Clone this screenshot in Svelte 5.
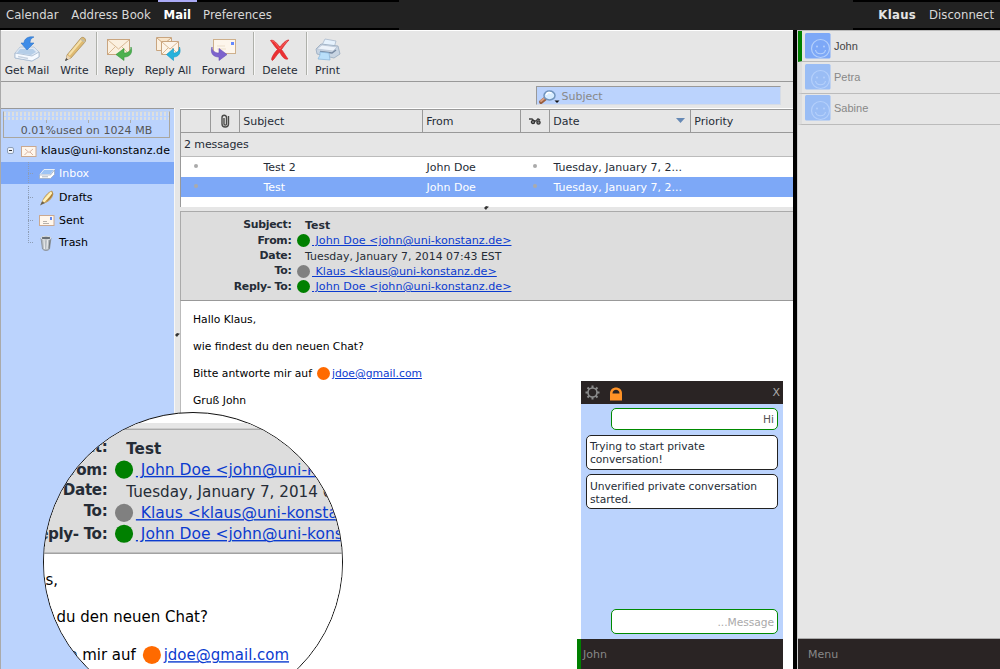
<script>
  const nav = ['Calendar', 'Address Book', 'Mail', 'Preferences'];
  const tools = [
    { id: 'get', label: 'Get Mail', w: 52 },
    { id: 'write', label: 'Write', w: 43 },
    { id: 'reply', label: 'Reply', w: 46, sep: true },
    { id: 'replyall', label: 'Reply All', w: 52 },
    { id: 'forward', label: 'Forward', w: 59 },
    { id: 'delete', label: 'Delete', w: 53, sep: true },
    { id: 'print', label: 'Print', w: 42, sep: true }
  ];
  const folders = [
    { id: 'inbox', name: 'Inbox' },
    { id: 'drafts', name: 'Drafts' },
    { id: 'sent', name: 'Sent' },
    { id: 'trash', name: 'Trash' }
  ];
  const messages = [
    { subject: 'Test 2', from: 'John Doe', date: 'Tuesday, January 7, 2...' },
    { subject: 'Test', from: 'John Doe', date: 'Tuesday, January 7, 2...', selected: true }
  ];
  const headers = [
    { label: 'Subject:', text: 'Test', kind: 'bold' },
    { label: 'From:', text: 'John Doe <john@uni-konstanz.de>', color: '#008000' },
    { label: 'Date:', text: 'Tuesday, January 7, 2014 07:43 EST', kind: 'plain' },
    { label: 'To:', text: 'Klaus <klaus@uni-konstanz.de>', color: '#808080' },
    { label: 'Reply- To:', text: 'John Doe <john@uni-konstanz.de>', color: '#008000' }
  ];
  const buddies = ['John', 'Petra', 'Sabine'];
</script>

{#snippet toolIcon(id)}
  <svg width="28" height="28" viewBox="0 0 28 28">
    {#if id === 'get'}
      <path d="M2 17 7 11h14l5 5v5l-7 4-17-3z" fill="#dfe9f5" stroke="#b3c3d6" stroke-width=".8" />
      <path d="m2 17 17 3 7-4v5l-7 4-17-3z" fill="#f6faff" stroke="#a3b7ce" stroke-width=".8" />
      <path d="m7 13-3 4 14 2 5-3-3-3z" fill="#b5cee8" />
      <path d="M21 1C15 0 11 3 11 7H8l6 7 7-7h-4c0-3 1-5 4-6z" fill="#3d8ce8" stroke="#3476c6" stroke-width=".6" />
      <path d="m5 20.500 10 2" stroke="#c8d3e1" stroke-width="1.500" />
    {:else if id === 'write'}
      <path d="m5 24 1-5L20 2c2-2 6 1 4 4L10 22z" fill="#dfba70" stroke="#a98e5b" stroke-width=".8" />
      <path d="m8 19 13-15.500" stroke="#f5e0a8" stroke-width="2" />
      <path d="m5 24 1-5 4 3z" fill="#ead4b5" />
      <path d="m4.500 24.500 1-2 1 1z" fill="#444" stroke="#555" />
      <path d="m20 3 4 3" stroke="#c5bca0" stroke-width="2" />
    {:else if id === 'reply'}
      <rect x="1.500" y="3.500" width="22" height="15" fill="#fbf0e0" stroke="#c9a57f" />
      <path d="m2 4 10.500 9L23 4M2 18l8-8m13 8-8-8" fill="none" stroke="#d9b994" />
      <path d="M25 11c2 6-1 10-7 10v3.500l-8-6 8-6V17c4 0 7-2 7-6z" fill="#4db14f" stroke="#329439" stroke-width=".6" />
    {:else if id === 'replyall'}
      <path d="M2.500 1.500h15v13h-15z" fill="#fbf0e0" stroke="#c9a57f" />
      <path d="m3 2 7 6 7-6" fill="#f8e5cb" stroke="#c9a57f" />
      <path d="M7.500 5.500h17v13h-17z" fill="#fdf5ea" stroke="#c9a57f" />
      <path d="m8 6 8 7 8-7M8 18l6-6m10 6-6-6" fill="none" stroke="#d9b994" />
      <path d="M25.500 11c2 6-1 10-6 10v3.500l-7-6 7-6V17c3.500 0 6-2 6-6z" fill="#25b2dc" stroke="#1097c2" stroke-width=".6" />
    {:else if id === 'forward'}
      <rect x="3.500" y="3.500" width="22" height="14" fill="#fdf6ec" stroke="#ceb08c" />
      <path d="M21 6h3v3h-3z" fill="#6388ff" />
      <path d="M7 10h8m-8 3h9" stroke="#ecdfcb" />
      <path d="M2 11c-2 6 1 10 7 10v3.500l8-6-8-6V17c-4 0-7-2-7-6z" fill="#7d63cd" stroke="#664db8" stroke-width=".6" />
    {:else if id === 'delete'}
      <path d="M4.500 4.500C8 3 11 8 14 11c3-4 6-7 9-7-4 4-5.500 7-7.500 9.500 3 4 4.500 7 6.500 9.500-4 1-6-3-8.500-7-3 3-5 7-7 8.500-2.500-.5 1-7 5-11-3-3-4.500-6-7-9z" fill="#ec3032" stroke="#d62a2e" stroke-width=".7" />
      <path d="M6 5c3 0 5 5 8 8 3-4 5-6 7-8" fill="none" stroke="#f9625e" />
    {:else}
      <path d="m8 9 3-6 11 2-2 7" fill="#e6f2fd" stroke="#a9b9cb" stroke-width=".8" />
      <path d="M2 13 7 8l17 2 2 8-6 4-17-4z" fill="#c8d4e2" stroke="#97a9be" stroke-width=".8" />
      <path d="m3 13 5-4 15 2-4 4z" fill="#edf3fa" stroke="#b4c1d2" stroke-width=".7" />
      <path d="m6 15.500 12 1.500 4-3" fill="none" stroke="#7688a0" stroke-width="1.500" />
      <path d="m6 16 9 1 1 7-12-1 2-4z" fill="#b9dffa" stroke="#8db8dc" stroke-width=".8" />
    {/if}
  </svg>
{/snippet}

{#snippet folderIcon(id)}
  <svg width="16" height="16" viewBox="0 0 16 16">
    {#if id === 'inbox'}
      <path d="m1 9.500 4-5h10.500l-4 5z" fill="#9dc4f5" stroke="#e8eff7" />
      <path d="M.5 10h11l4-5v4.500l-4 4H.500z" fill="#fff" stroke="#98a8bc" stroke-width=".7" />
      <path d="M3 11.800h6" stroke="#aab5c2" />
    {:else if id === 'drafts'}
      <path d="M3 13C4 8 9 2 13 1l1 3c-1 5-5 8-9 9z" fill="#e8c576" stroke="#aa8140" stroke-width=".6" />
      <path d="m4.500 11.500 8-9" stroke="#fff3bb" stroke-width="2.500" />
      <path d="m1 15.500 2-4 3 1.500z" fill="#6b604a" />
      <path d="M14 2c0 4-3 8-8 10 3-3 6-6 8-10z" fill="#a67935" />
    {:else if id === 'trash'}
      <path d="m2 3 1.500 11c2 2 5 2 7 0L12 3z" fill="#b4babf" stroke="#858c92" stroke-width=".8" />
      <path d="m5 5 .5 9m3-9L8 14" stroke="#e9ebec" stroke-width="1.200" />
      <ellipse cx="7" cy="3" rx="5" ry="1.800" fill="#687077" stroke="#dbdee0" />
      <path d="m11 5-1 8.500" stroke="#72797d" />
    {:else}
      <rect x=".5" y="3.500" width="14.500" height="10" fill="#fff7ed" stroke="#cba990" />
      {#if id === 'account'}
        <path d="m4 6 4 3.500L12 6M3.500 12l3-3m5.500 3L9 9" fill="none" stroke="#d9b4a3" />
      {:else}
        <path d="M11 5h2v3h-2z" fill="#6387ef" /><path d="M4 9.500h4m-4 2h6" stroke="#b6b1ab" />
      {/if}
    {/if}
  </svg>
{/snippet}

{#snippet mailView()}
  <div class="mail-view">
    <div class="splitter"></div>
    <div class="mail-head">
      {#each headers as h}
        <div class="hrow">
          <b class="hlabel">{h.label}</b>
          {#if h.color}
            <i class="dot" style="background:{h.color}"></i><a class="addr" href="#mail">&nbsp;{h.text}</a>
          {:else}
            <span class="hval {h.kind}">{h.text}</span>
          {/if}
        </div>
      {/each}
    </div>
    <div class="mail-body">
      <p>Hallo Klaus,</p>
      <p>wie findest du den neuen Chat?</p>
      <p><span>Bitte antworte mir auf</span><i class="dot orange"></i><a href="#mail">jdoe@gmail.com</a></p>
      <p>Gruß John</p>
    </div>
  </div>
{/snippet}

<div class="app">
  <header>
    <nav>
      {#each nav as item}
        <span class:active={item === 'Mail'}>{item}</span>
      {/each}
    </nav>
    <div class="user"><b>Klaus</b><span>Disconnect</span></div>
  </header>

  <main>
    <div class="toolbar">
      {#each tools as t}
        <div class="tool" class:sep={t.sep} style="width:{t.w}px">
          {@render toolIcon(t.id)}
          <span>{t.label}</span>
        </div>
      {/each}
    </div>
    <div class="searchrow">
      <div class="search">
        <svg width="24" height="18" viewBox="0 0 24 18">
          <path d="m4 15 5-4" stroke="#995e3e" stroke-width="4" stroke-linecap="round" />
          <path d="m4 14 5-4" stroke="#dba184" stroke-width="2" stroke-linecap="round" />
          <ellipse cx="12.500" cy="8.500" rx="5.500" ry="4.500" fill="#d7ecff" stroke="#7194bd" stroke-width="1.500" />
          <path d="M9.500 8c0-3 3-3 5-2" fill="none" stroke="#fff" stroke-width="1.500" />
          <path d="M17.500 13.500h5l-2.500 2.500z" fill="#111" />
        </svg>
        <span>Subject</span>
      </div>
    </div>
    <div class="work">
      <aside class="folders">
        <div class="quota">
          <div class="ticks"></div>
          <div class="marks"><i></i><i></i><i></i></div>
          <span>0.01%used on 1024 MB</span>
        </div>
        <div class="account">
          <i class="minus"></i>
          {@render folderIcon('account')}
          <span>klaus@uni-konstanz.de</span>
        </div>
        <div class="tree">
          {#each folders as f}
            <div class="folder {f.id}">
              <i class="branch"></i>
              {@render folderIcon(f.id)}
              <span>{f.name}</span>
            </div>
          {/each}
        </div>
        <i class="grip"></i>
      </aside>
      <section>
        <div class="list">
          <div class="grid thead">
            <span></span>
            <span class="mid">
              <svg width="10" height="15" viewBox="0 0 10 15"><path d="M4 4v6c0 1.500 2.500 1.500 2.500 0V3.500c0-3-4.500-3-4.500 0V10c0 4 6.500 4 6.500 0V2" fill="none" stroke="#4a4a48" stroke-width="1.400" /></svg>
            </span>
            <span>Subject</span>
            <span>From</span>
            <span class="mid">
              <svg width="14" height="9" viewBox="0 0 14 9"><path d="m1 2 3 0 2 2h2l2-2 2 1" fill="none" stroke="#444" stroke-width="1.500" /><circle cx="5" cy="5" r="1.600" fill="#888" stroke="#333" stroke-width="1.300" /><circle cx="10.500" cy="5.500" r="1.600" fill="#888" stroke="#333" stroke-width="1.300" /></svg>
            </span>
            <span class="date">Date<i></i></span>
            <span>Priority</span>
          </div>
          <div class="count">2 messages</div>
          {#each messages as m}
            <div class="grid row" class:selected={m.selected}>
              <span class="mid"><i></i></span>
              <span></span>
              <span class="subj">{m.subject}</span>
              <span>{m.from}</span>
              <span class="mid"><i></i></span>
              <span>{m.date}</span>
              <span></span>
            </div>
          {/each}
        </div>
        {@render mailView()}
        <i class="grip horizontal"></i>
      </section>
    </div>
  </main>

  <aside class="roster">
    <div class="buddies">
      {#each buddies as name, n}
        <div class="buddy" class:online={n === 0}>
          <svg width="26" height="26" viewBox="0 0 26 26">
            <rect width="25.500" height="25.500" rx="1.500" fill={n === 0 ? '#7da8f7' : '#9abdf5'} />
            <g fill="none" stroke="#b5d0fb" stroke-width="1.200"><circle cx="15.500" cy="15.500" r="9" /><path d="M10.500 17c1 5 9 5 10 0" /></g>
            <circle cx="12" cy="13.500" r="1" fill="#b5d0fb" /><circle cx="19" cy="13.500" r="1" fill="#b5d0fb" />
          </svg>
          <span>{name}</span>
        </div>
      {/each}
    </div>
    <div class="menu">Menu</div>
  </aside>

  <div class="chat">
    <div class="chat-head">
      <svg width="15" height="15" viewBox="0 0 15 15"><circle cx="7.500" cy="7.500" r="4.500" fill="none" stroke="#8a8a8a" stroke-width="1.600" /><path d="M7.500.5v2.500M7.500 12v2.500M.5 7.500h2.500M12 7.500h2.500M2.500 2.500l1.800 1.800M10.700 10.700l1.800 1.800M2.500 12.500l1.800-1.800M10.700 4.300l1.800-1.800" stroke="#8a8a8a" stroke-width="2" /></svg>
      <svg width="12" height="14" viewBox="0 0 12 14"><path d="M0 13.500v-7C0-1.500 12-1.500 12 6.500v7z" fill="#ff9226" /><path d="M2.500 6.500c0-5 7-5 7 0z" fill="#2a2424" /></svg>
      <span>X</span>
    </div>
    <div class="chat-body">
      <div class="bubble own">Hi</div>
      <div class="bubble">Trying to start private conversation!</div>
      <div class="bubble">Unverified private conversation started.</div>
      <div class="bubble own entry">...Message</div>
    </div>
    <div class="chat-foot">John</div>
  </div>

  <div class="lens"><div class="zoomed">{@render mailView()}</div></div>
</div>

<style>
  :global(body) { margin: 0; }
  .app { position: relative; width: 1000px; height: 669px; overflow: hidden; background: #000; display: grid; grid-template: 30px 639px / 793px 4px 203px; font: 11px "DejaVu Sans", sans-serif; color: #252c36; box-sizing: border-box; }
  .app * { box-sizing: border-box; }
  svg { flex: none; display: block; }
  span, b { white-space: nowrap; }
  header { grid-column: 1 / 4; background: #222; display: flex; justify-content: space-between; color: #d8d8d8; font-size: 11.700px; }
  nav { width: 399px; border-top: 2px solid #000; border-bottom: 2px solid #000; display: flex; padding-left: 6px; line-height: 26px; }
  nav span { margin-right: 12.800px; }
  nav .active { color: #fff; font-weight: bold; font-size: 11.700px; border-top: 2px solid #aaaaf5; margin: -2px 6px 0 -6px; padding: 0 6px; line-height: 26px; }
  .user { width: 147px; border-top: 2px solid #000; border-bottom: 2px solid #000; display: flex; justify-content: flex-end; gap: 13px; padding-right: 6px; line-height: 26px; }
  .user b { color: #e4e4e4; letter-spacing: .3px; }
  main { grid-column: 1; background: #e6e6e6; border-left: 1px solid #aaa; display: flex; flex-direction: column; }
  .toolbar { height: 52px; border-top: 1px solid #fff; border-bottom: 1px solid #999; display: flex; padding-top: 1px; }
  .tool { height: 43px; display: flex; flex-direction: column; align-items: center; padding-top: 4px; }
  .tool span { line-height: 14px; font-size: 10.800px; }
  .sep { border-left: 1px solid #aeb0aa; box-shadow: inset 1px 0 #f7f7f7; }
  .searchrow { height: 26px; display: flex; justify-content: flex-end; padding: 4px 12px 0 0; }
  .search { width: 245px; height: 19px; background: #bbd3fd; border: 1px solid #d6dce6; border-top-color: #999; border-left-color: #999; display: flex; align-items: center; color: #888; }
  .search span { padding: 2px 0 0 .5px; }
  .work { flex: 1; display: flex; min-height: 0; }
  .folders { position: relative; width: 173px; margin-right: 6px; background: #bbd3fd; border-top: 1px solid #999; box-shadow: 1px 0 #f7f7f7; color: #000; }
  .quota { margin: 2px 4px 0 2px; height: 27px; border: 1px solid #aaa69d; border-top-color: #c6d4e8; color: #555; display: flex; flex-direction: column; align-items: center; position: relative; }
  .ticks { width: 165px; height: 9px; background: linear-gradient(#bbd3fd, #bbd3fd) 0 4px / 100% 1px no-repeat, repeating-linear-gradient(90deg, #dddfdf 0 2px, #bbd3fd 2px 4px); }
  .marks { width: 100%; height: 4px; display: flex; justify-content: space-between; padding: 0 38px 0 42px; }
  .marks i { width: 1px; height: 3px; background: #aaa; }
  .quota span { line-height: 13px; font-size: 11px; letter-spacing: .05px; }
  .account { height: 24px; display: flex; align-items: center; padding: 1px 0 0 6px; }
  .account span { margin-left: 4px; letter-spacing: .08px; }
  .minus { width: 7px; height: 7px; border: 1px solid #8fa0b8; border-radius: 2px; background: linear-gradient(#333, #333) 1px 2px / 3px 1px no-repeat #eef3fb; margin-right: 7px; }
  .folder { height: 22.500px; display: flex; align-items: center; padding-left: 27px; }
  .folder.inbox { background: #7da8f7; color: #fff; height: 22px; }
  .folder.drafts { height: 25px; padding-top: 2px; }
  .folder span { margin-left: 4px; }
  .branch { width: 11px; align-self: stretch; background: repeating-linear-gradient(#8d9db5 0 1px, transparent 1px 2px) 0 0 / 1px 100% no-repeat, repeating-linear-gradient(90deg, #8d9db5 0 1px, transparent 1px 2px) 0 50% / 6px 1px no-repeat; }
  .trash .branch { height: 50%; align-self: flex-start; background-position: 0 0, 0 100%; }
  .grip { position: absolute; left: 174px; top: 224px; width: 5px; height: 4px; background: #333; clip-path: polygon(0 50%, 40% 0, 100% 20%, 60% 60%, 40% 100%); }
  .grip.horizontal { left: 304px; top: 98px; }
  section { position: relative; width: 613px; display: flex; flex-direction: column; background: #fff; }
  .list { height: 98px; border-left: 1px solid #999; border-top: 1px solid #999; margin-top: 1px; background: #fff; flex: none; }
  .grid { display: grid; grid-template-columns: 30px 29px 183px 98px 29px 141px 1fr; align-items: center; }
  .thead { height: 23px; background: #e6e6e6; border-bottom: 1px solid #999; }
  .thead span { height: 100%; border-right: 1px solid #999; padding-left: 3.200px; line-height: 23px; }
  .thead span:last-child { border: 0; }
  .grid .mid { display: flex; justify-content: center; align-items: center; padding: 0; }
  .date { display: flex; justify-content: space-between; align-items: center; padding-right: 5px; }
  .date i { width: 9px; height: 5px; background: #6689b5; clip-path: polygon(0 0, 100% 0, 50% 100%); margin-top: -2px; }
  .count { height: 24px; line-height: 23px; padding-left: 3px; border-bottom: 1px solid #bbb; background: #e6e6e6; letter-spacing: -.1px; }
  .row { height: 20px; }
  .row span { padding-left: 3.500px; }
  .row .subj { padding-left: 23.500px; }
  .row .mid i { width: 4px; height: 4px; border-radius: 50%; background: #aaa; margin: -2px 0 0 -1px; }
  .selected { background: #7da8f7; color: #fff; }
  .mail-view { width: 613px; color: #252c36; }
  .splitter { height: 4px; background: #e6e6e6; }
  .mail-head { height: 90px; border-top: 1px solid #aaa; border-left: 1px solid #aaa; border-bottom: 1px solid #999; background: #ddd; padding-top: 5.800px; font-size: 10.900px; }
  .hrow { height: 15.300px; display: flex; align-items: center; }
  .hlabel { width: 110.500px; text-align: right; font-size: 10.900px; letter-spacing: -.28px; position: relative; top: -.5px; }
  .hval { margin-left: 13.600px; }
  .bold { font-weight: bold; }
  .addr { font-size: 11.150px; }
  .dot { width: 13px; height: 13px; border-radius: 50%; flex: none; margin: 0 2px 0 5.500px; }
  a { color: #0b3bcf; text-decoration: underline; white-space: nowrap; }
  .mail-body { height: 369px; background: #fff; border-left: 1px solid #bbb; color: #000; padding: 5.500px 0 0 12px; font-size: 10.750px; }
  p { margin: 0; height: 26.800px; display: flex; align-items: center; }
  .orange { background: #ff6a00; margin: 0 2px 0 5px; }
  .roster { grid-column: 3; background: #e6e6e6; display: flex; flex-direction: column; justify-content: space-between; border-left: 1px solid #ccc; border-top: 1px solid #bbb; }
  .buddy { height: 31.300px; border-left: 4px solid #ddd; border-bottom: 1px solid #bbb; padding-left: 3px; display: flex; align-items: center; gap: 3px; color: #888; font: 11px "Liberation Sans", sans-serif; }
  .buddy svg { margin-top: -1px; }
  .buddy span { margin-top: -1px; }
  .online { border-left-color: #008000; color: #444; }
  .menu { height: 31px; background: #2a2424; border-top: 1px solid #aaa; color: #888; line-height: 31px; padding-left: 10px; }
  .chat { position: absolute; left: 577px; top: 381px; width: 206px; height: 288px; display: flex; flex-direction: column; }
  .chat-head { height: 23px; margin-left: 4px; background: #2a2424; display: flex; align-items: center; padding: 0 3px 0 4px; }
  .chat-head svg + svg { margin-left: 10px; margin-top: 2px; }
  .chat-head span { margin-left: auto; color: #aaa; }
  .chat-body { flex: 1; margin-left: 4px; background: #bbd3fd; padding: 4px 5px 5px; display: flex; flex-direction: column; gap: 4.500px; }
  .bubble { height: 35px; border: 1px solid #222; border-radius: 5px; background: #fff; padding: 4.500px 3px; line-height: 13px; font-size: 10.700px; letter-spacing: -.05px; }
  .own { height: 22px; margin-left: 25px; border-color: #008a00; text-align: right; color: #555; padding-top: 4px; }
  .entry { height: 25px; margin-top: auto; color: #aaa; padding-top: 6px; }
  .chat-foot { height: 30px; border-left: 4px solid #008000; background: #2a2424; color: #888; line-height: 31px; padding-left: 2px; }
  .lens { position: absolute; left: 43px; top: 412px; width: 300px; height: 300px; border-radius: 50%; border: 1px solid #111; background: #fff; overflow: hidden; }
  .zoomed { position: absolute; left: -92px; top: 10.300px; transform: scale(1.393); transform-origin: 0 0; }
</style>
